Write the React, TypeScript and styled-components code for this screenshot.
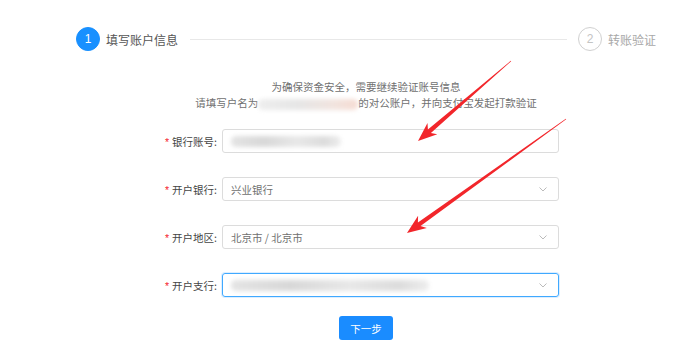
import React from "react";
import styled, { createGlobalStyle } from "styled-components";

const Global = createGlobalStyle`
  html, body { margin: 0; padding: 0; background: #fff; }
  body { font-family: "Noto Sans CJK SC", "Noto Sans", sans-serif; }
`;

const Page = styled.div`
  position: relative;
  width: 700px;
  height: 360px;
  overflow: hidden;
  background: #fff;
`;

const Main = styled.div`
  width: 580px;
  margin-left: 76px;
  padding-top: 27px;
  display: flex;
  flex-direction: column;
`;

const Steps = styled.div`
  display: flex;
  align-items: center;
  height: 24px;
`;

const Circle = styled.div<{ $active?: boolean }>`
  width: 24px;
  height: 24px;
  box-sizing: border-box;
  border-radius: 50%;
  display: flex;
  align-items: center;
  justify-content: center;
  font-family: "Liberation Sans", Arial, sans-serif;
  font-size: 12px;
  color: ${(p) => (p.$active ? "#fff" : "#c4c4c4")};
  background: ${(p) => (p.$active ? "#1890ff" : "#fff")};
  border: 1px solid ${(p) => (p.$active ? "#1890ff" : "#d0d0d0")};
`;

const StepTitle = styled.span<{ $active?: boolean }>`
  margin-left: 6px;
  font-size: 12px;
  color: ${(p) => (p.$active ? "#555" : "#a8a8a8")};
`;

const StepLine = styled.div`
  flex: 1;
  height: 1px;
  background: #e8e8e8;
  margin: 0 11px 0 12px;
`;

const Info = styled.div`
  margin-top: 28px;
  text-align: center;
  font-size: 10.5px;
  line-height: 16px;
  color: #707070;
`;

const Blur = styled.span<{ $w: number; $tint?: string }>`
  display: inline-block;
  vertical-align: middle;
  width: ${(p) => p.$w}px;
  height: 11px;
  border-radius: 5px;
  background: ${(p) =>
    p.$tint ||
    "linear-gradient(90deg, #e4e4e4 0%, #d8d8d8 30%, #e8e8e8 60%, #dcdcdc 85%, #eee 100%)"};
  filter: blur(2px);
`;

const Form = styled.div`
  margin-top: 18px;
  margin-left: 75px;
  display: flex;
  flex-direction: column;
  gap: 24px;
`;

const Row = styled.div`
  display: flex;
  align-items: center;
`;

const Label = styled.label`
  width: 71px;
  padding-right: 5px;
  box-sizing: border-box;
  text-align: right;
  font-size: 10.5px;
  color: #444;
  white-space: nowrap;
`;

const Star = styled.span`
  color: #f5222d;
  margin-right: 3px;
  font-family: "Liberation Sans", Arial, sans-serif;
`;

const Field = styled.div<{ $focus?: boolean }>`
  width: 337px;
  height: 24px;
  box-sizing: border-box;
  border: 1px solid ${(p) => (p.$focus ? "#40a9ff" : "#dcdcdc")};
  border-radius: 3px;
  display: flex;
  align-items: center;
  padding: 0 10px 0 8px;
  font-size: 10.5px;
  color: #707070;
  box-shadow: ${(p) => (p.$focus ? "0 0 0 1px rgba(24,144,255,0.15)" : "none")};
`;

const FieldText = styled.span`
  flex: 1;
  display: flex;
  align-items: center;
`;

const Chevron = styled.svg`
  width: 10px;
  height: 10px;
  flex: none;
`;

const ButtonRow = styled.div`
  display: flex;
  justify-content: center;
  margin-top: 19px;
`;

const Button = styled.button`
  width: 54px;
  height: 24px;
  border: none;
  border-radius: 3px;
  background: #1a8cff;
  color: #fff;
  font-family: "Noto Sans CJK SC", sans-serif;
  font-size: 10.5px;
  padding: 0;
`;

const Overlay = styled.svg`
  position: absolute;
  left: 0;
  top: 0;
  pointer-events: none;
`;

function arrow(tx: number, ty: number, hx: number, hy: number) {
  const dx = hx - tx;
  const dy = hy - ty;
  const len = Math.hypot(dx, dy);
  const ux = dx / len;
  const uy = dy / len;
  const nx = -uy;
  const ny = ux;
  const at = (d: number, w: number) =>
    `${(tx + ux * d + nx * w).toFixed(1)},${(ty + uy * d + ny * w).toFixed(1)}`;
  return [
    at(0, 0.3),
    at(len - 15, 2.3),
    at(len - 19, 7.5),
    at(len, 0),
    at(len - 19, -7.5),
    at(len - 15, -2.3),
    at(0, -0.3),
  ].join(" ");
}

const Chev = () => (
  <Chevron viewBox="0 0 10 10">
    <path d="M1.5 3.5 L5 7 L8.5 3.5" fill="none" stroke="#bbb" strokeWidth="1" />
  </Chevron>
);

export default function App() {
  return (
    <Page>
      <Global />
      <Main>
        <Steps>
          <Circle $active>1</Circle>
          <StepTitle $active>填写账户信息</StepTitle>
          <StepLine />
          <Circle>2</Circle>
          <StepTitle>转账验证</StepTitle>
        </Steps>
        <Info>
          <div>为确保资金安全，需要继续验证账号信息</div>
          <div>
            请填写户名为
            <Blur
              $w={100}
              $tint="linear-gradient(90deg, #eee 0%, #e6e6e6 40%, #f1e4df 75%, #f6dcd3 100%)"
            />
            的对公账户，并向支付宝发起打款验证
          </div>
        </Info>
        <Form>
          <Row>
            <Label>
              <Star>*</Star>银行账号:
            </Label>
            <Field>
              <FieldText>
                <Blur $w={110} />
              </FieldText>
            </Field>
          </Row>
          <Row>
            <Label>
              <Star>*</Star>开户银行:
            </Label>
            <Field>
              <FieldText>兴业银行</FieldText>
              <Chev />
            </Field>
          </Row>
          <Row>
            <Label>
              <Star>*</Star>开户地区:
            </Label>
            <Field>
              <FieldText>北京市 / 北京市</FieldText>
              <Chev />
            </Field>
          </Row>
          <Row>
            <Label>
              <Star>*</Star>开户支行:
            </Label>
            <Field $focus>
              <FieldText>
                <Blur $w={198} />
              </FieldText>
              <Chev />
            </Field>
          </Row>
        </Form>
        <ButtonRow>
          <Button>下一步</Button>
        </ButtonRow>
      </Main>
      <Overlay width="700" height="360" viewBox="0 0 700 360">
        <polygon points={arrow(511, 61, 418, 141)} fill="#f2262b" />
        <polygon points={arrow(566, 119, 407, 233)} fill="#f2262b" />
      </Overlay>
    </Page>
  );
}
